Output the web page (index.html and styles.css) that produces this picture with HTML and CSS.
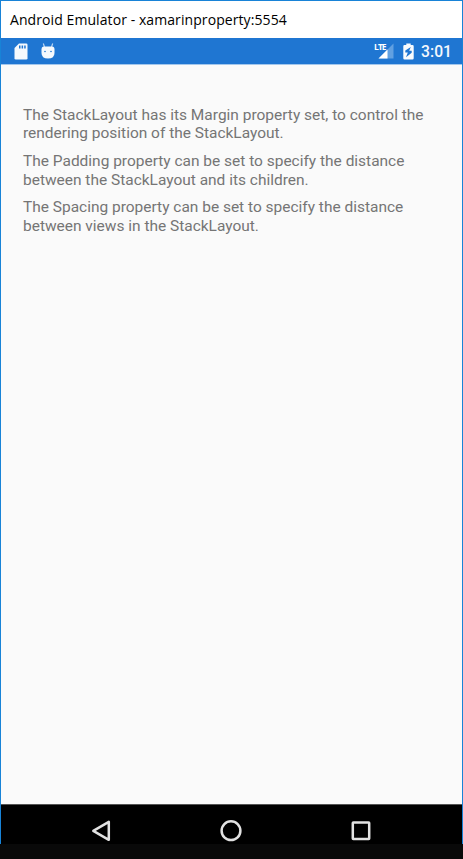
FILE: index.html
```html
<!DOCTYPE html>
<html lang="en">
<head>
<meta charset="utf-8">
<title>Android Emulator</title>
<link rel="stylesheet" href="styles.css">
</head>
<body>
<div class="window">
  <header class="titlebar"><span class="title">Android Emulator - xamarinproperty:5554</span></header>
  <div class="status">
    <svg class="sd" width="14" height="17" viewBox="0 0 14 17"><path fill="#f5f9fd" d="M5 .5h7.2q1.3 0 1.3 1.3v13.4q0 1.3-1.3 1.3H1.8Q.5 16.500.5 15.200V5z"/><path fill="#1f76d2" d="M5 2.500h1.500v3H5zM7.600 2.500h1.500v3H7.600zM10.200 2.500h1.500v3h-1.500z"/></svg>
    <svg class="droid" width="14" height="17" viewBox="0 0 14 17"><path stroke="#b9d5f2" stroke-width="1.200" d="M2.300.5 3.500 4M11.700.5 10.500 4"/><path fill="#f5f9fd" d="M.5 6.500Q.5 3.500 3 3.500h8q2.500 0 2.500 3V10q0 5.500-6.500 5.500T.5 10z"/><circle cx="4" cy="8.500" r=".8" fill="#1f76d2"/><circle cx="10" cy="8.500" r=".8" fill="#1f76d2"/></svg>
    <span class="network">
      <svg width="20" height="18" viewBox="0 0 20 18"><path fill="#61a0e1" d="M19.500 1.500v15H4.500z"/><path fill="#fff" d="M13.500 7.500v9h-9z"/><path fill="#1f76d2" d="M0 0h11v8H0z"/></svg>
      <span class="lte">LTE</span>
    </span>
    <svg class="battery" width="11" height="17" viewBox="0 0 11 17"><path fill="#f8fbfe" d="M3.300.5h4.400V2H9.500q1.200 0 1.200 1.200v12q0 1.300-1.200 1.300h-8Q.3 16.500.3 15.200v-12Q.3 2 1.500 2h1.800z"/><path fill="#1f76d2" d="M7.800 4 2.300 7.500v2h2.500L3 14.200l5.700-4.500v-2H6.200z"/></svg>
    <span class="clock">3:01</span>
  </div>
  <main class="content">
    <p>The StackLayout has its Margin property set, to control the<br>rendering position of the StackLayout.</p>
    <p>The Padding property can be set to specify the distance<br>between the StackLayout and its children.</p>
    <p>The Spacing property can be set to specify the distance<br>between views in the StackLayout.</p>
  </main>
  <nav class="nav">
    <svg width="22" height="24" viewBox="0 0 22 24"><path d="M18.800 2.800v18L3.300 11.800z"/></svg>
    <svg width="24" height="24" viewBox="0 0 24 24"><circle cx="12" cy="11.700" r="9.400"/></svg>
    <svg width="22" height="24" viewBox="0 0 22 24"><rect x="2.800" y="3.500" width="16.400" height="16.400" rx=".5"/></svg>
  </nav>
</div>
</body>
</html>
```
FILE: styles.css
```css
* { box-sizing: border-box; }
body { margin: 0; height: 859px; background: #090909; overflow: hidden; }
.window {
  height: 844px;
  border: 1px solid #1883d7;
  border-bottom: 0;
  display: flex;
  flex-direction: column;
  background: #fafafa;
}
.titlebar {
  height: 37px;
  padding: 0 9px;
  display: flex;
  align-items: center;
  background: #fff;
  color: #000;
  font: 14px/20px "Open Sans", "Noto Sans", sans-serif;
  white-space: nowrap;
}
.title { letter-spacing: 0.080px; }
.status {
  height: 27px;
  padding: 0 10px 0 13px;
  display: flex;
  align-items: center;
  background: #1f76d2;
  border-bottom: 1px solid #a3c7ec;
}
.droid { margin-left: 13px; }
.network { position: relative; height: 18px; margin-left: auto; }
.network svg { display: block; }
.lte {
  position: absolute;
  left: 0;
  top: 1px;
  color: #fff;
  font: bold 8.500px/8px "Open Sans", sans-serif;
  letter-spacing: -1px;
}
.battery { margin-left: 9px; }
.clock {
  margin: 2px 0 0 7px;
  color: #f4f8fd;
  font: 500 15.700px/20px Roboto, sans-serif;
}
.content {
  flex: 1;
  padding: 41.200px 22px 0;
  color: #757575;
  font: 15.480px/18.300px Roboto, sans-serif;
  white-space: nowrap;
}
.content p { margin: 0 0 9.500px; }
.nav {
  height: 40px;
  padding: 14px 90px 0 89px;
  display: flex;
  justify-content: space-between;
  background: #000;
  border-top: 1px solid #555;
}
.nav svg { fill: none; stroke: #e2e2e2; stroke-width: 2.500; stroke-linejoin: round; }
```
